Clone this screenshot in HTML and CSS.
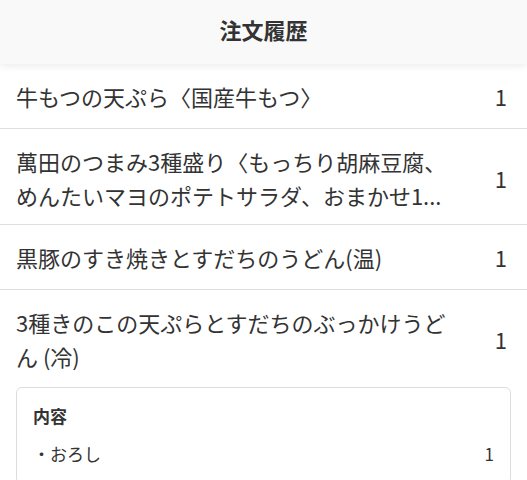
FILE: index.html
```html
<!DOCTYPE html>
<html lang="ja">
<head>
<meta charset="utf-8">
<title>注文履歴</title>
<link rel="stylesheet" href="styles.css">
</head>
<body>
<header class="header">
  <h1 class="title">注文履歴</h1>
</header>
<ul class="list">
  <li class="item">
    <div class="row">
      <div class="name">牛もつの天ぷら〈国産牛もつ〉</div>
      <div class="qty">1</div>
    </div>
  </li>
  <li class="item item-tight">
    <div class="row">
      <div class="name">
        <span class="line">萬田のつまみ3種盛り〈もっちり胡麻豆腐、</span>
        <span class="line">めんたいマヨのポテトサラダ、おまかせ1...</span>
      </div>
      <div class="qty">1</div>
    </div>
  </li>
  <li class="item">
    <div class="row">
      <div class="name">黒豚のすき焼きとすだちのうどん(温)</div>
      <div class="qty">1</div>
    </div>
  </li>
  <li class="item">
    <div class="row">
      <div class="name">3種きのこの天ぷらとすだちのぶっかけうどん (冷)</div>
      <div class="qty">1</div>
    </div>
    <div class="detail">
      <div class="detail-title">内容</div>
      <div class="detail-row">
        <span class="detail-name">・おろし</span>
        <span class="detail-qty">1</span>
      </div>
    </div>
  </li>
</ul>
</body>
</html>
```

FILE: styles.css
```css
* { box-sizing: border-box; }
html, body {
  margin: 0;
  padding: 0;
  background: #fff;
}
body {
  font-family: "Noto Sans CJK JP", "Noto Sans", sans-serif;
  color: #333;
  overflow: hidden;
}
.header {
  height: 64px;
  padding-bottom: 6px;
  background: #f9f9f9;
  box-shadow: 0 2px 8px rgba(0,0,0,0.08);
  display: flex;
  align-items: center;
  justify-content: center;
  position: relative;
  z-index: 1;
}
.title {
  margin: 0;
  font-size: 22px;
  font-weight: 700;
  color: #333;
  line-height: 1;
}
.list {
  list-style: none;
  margin: 0;
  padding: 0;
}
.item {
  border-bottom: 1px solid #dedede;
  padding: 15px 0;
}
.item-tight {
  padding-bottom: 12px;
}
.row {
  display: flex;
  align-items: center;
  padding: 0 20px 0 16px;
}
.name {
  flex: 1;
  min-width: 0;
  font-size: 22px;
  line-height: 34px;
  margin-right: 48px;
}
.line {
  display: block;
  white-space: nowrap;
}
.qty {
  font-size: 22px;
  line-height: 34px;
}
.detail {
  margin: 14px 16px 0;
  border: 1px solid #ddd;
  border-radius: 6px;
  padding: 15px 16px 16px 16px;
}
.detail-title {
  font-size: 17px;
  font-weight: 700;
  line-height: 26px;
}
.detail-row {
  display: flex;
  justify-content: space-between;
  margin-top: 12px;
  font-size: 17px;
  line-height: 26px;
}
```
